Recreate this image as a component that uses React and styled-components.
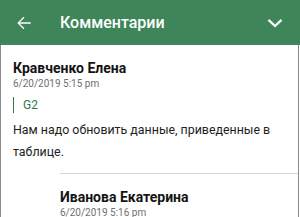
import React from 'react';
import styled, { createGlobalStyle } from 'styled-components';

const GlobalStyle = createGlobalStyle`
    html, body {
        margin: 0;
        padding: 0;
        background: #fff;
        font-family: Roboto, "Liberation Sans", sans-serif;
    }
`;

const comments = [
    {
        id: 1,
        author: 'Кравченко Елена',
        date: '6/20/2019 5:15 pm',
        cell: 'G2',
        text: 'Нам надо обновить данные, приведенные в таблице.',
    },
    {
        id: 2,
        author: 'Иванова Екатерина',
        date: '6/20/2019 5:16 pm',
        reply: true,
    },
];

const App = () => {
    return (
        <StyledScreen>
            <GlobalStyle />
            <StyledToolbar>
                <StyledIconButton aria-label="Назад">
                    <svg width="20" height="20" viewBox="0 0 24 24">
                        <path fill="#fff" d="M20 11.2H6.9l5.6-5.6-1.1-1.1L4 12l7.4 7.5 1.1-1.1-5.6-5.6H20z" />
                    </svg>
                </StyledIconButton>
                <StyledTitle>Комментарии</StyledTitle>
                <StyledIconButton aria-label="Свернуть" $right>
                    <svg width="16" height="10" viewBox="0 0 16 10">
                        <polyline points="1.5,1.8 8,8 14.5,1.8" fill="none" stroke="#fff" strokeWidth="2.3" />
                    </svg>
                </StyledIconButton>
            </StyledToolbar>
            <StyledPanel>
                {comments.map((c) => (
                    <StyledComment key={c.id} $reply={c.reply}>
                        <StyledAuthor>{c.author}</StyledAuthor>
                        <StyledDate>{c.date}</StyledDate>
                        {c.cell && <StyledQuote>{c.cell}</StyledQuote>}
                        {c.text && <StyledText>{c.text}</StyledText>}
                    </StyledComment>
                ))}
            </StyledPanel>
        </StyledScreen>
    );
};

const StyledScreen = styled.div`
    width: 300px;
    height: 217px;
    overflow: hidden;
`;

const StyledToolbar = styled.header`
    height: 45px;
    background: #3e8659;
    display: flex;
    align-items: center;
    padding: 0 15px 0 13px;
`;

const StyledIconButton = styled.div`
    display: flex;
    align-items: center;
    justify-content: center;
    width: 21px;
    height: 21px;
    margin-left: ${(p) => (p.$right ? 'auto' : '0')};
`;

const StyledTitle = styled.h1`
    margin: 0 0 0 26px;
    color: #fff;
    font-size: 16px;
    font-weight: 500;
    line-height: 20px;
`;

const StyledPanel = styled.main`
    width: 297px;
    height: 172px;
    border-left: 1px solid #8a8a8a;
    border-right: 1px solid #8a8a8a;
`;

const StyledComment = styled.section`
    margin-left: ${(p) => (p.$reply ? '59px' : '0')};
    padding: 14px 12px 10px ${(p) => (p.$reply ? '0' : '12px')};
    border-top: ${(p) => (p.$reply ? '1px solid #d6d6d6' : 'none')};
`;

const StyledAuthor = styled.div`
    font-size: 14px;
    font-weight: 700;
    line-height: 18px;
    color: #141414;
`;

const StyledDate = styled.div`
    font-size: 10px;
    line-height: 14px;
    color: #6f6f6f;
`;

const StyledQuote = styled.div`
    margin-top: 6px;
    border-left: 1px solid #2f7a48;
    padding-left: 9px;
    font-size: 12px;
    line-height: 16px;
    color: #2f7a48;
`;

const StyledText = styled.p`
    margin: 6px 0 0;
    font-size: 12.4px;
    line-height: 22px;
    color: #1e1e1e;
`;

export default App;
